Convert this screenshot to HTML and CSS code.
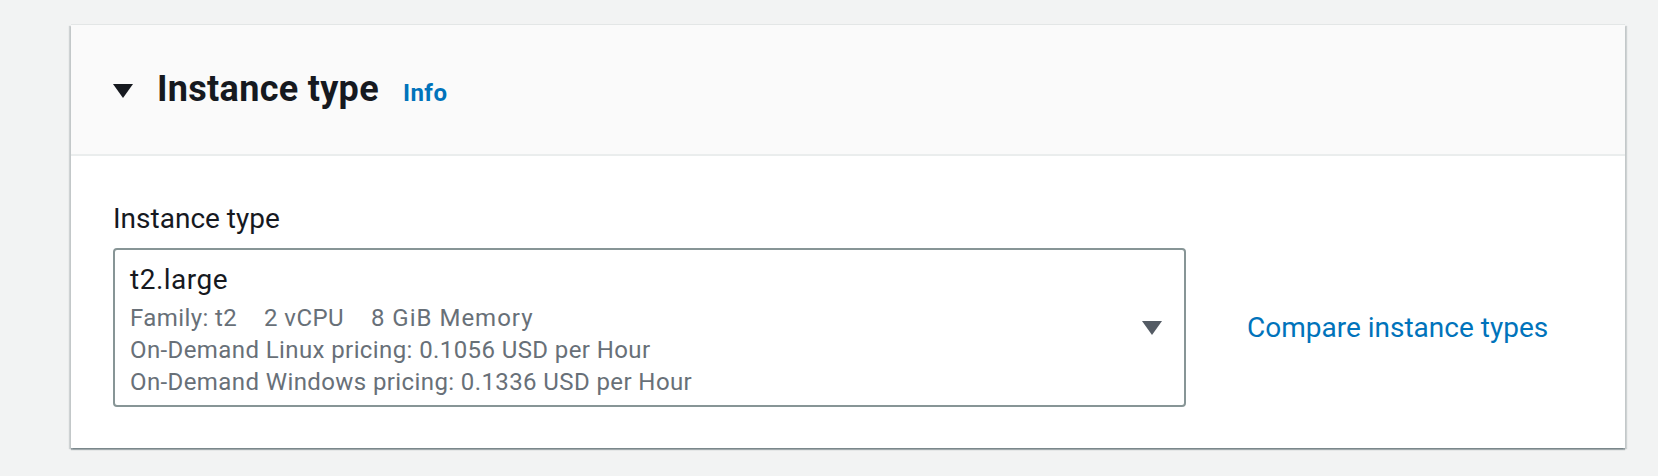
FILE: index.html
```html
<!DOCTYPE html>
<html lang="en">
<head>
<meta charset="utf-8">
<title>Instance type</title>
<link rel="stylesheet" href="styles.css">
</head>
<body>
<div class="page">
  <section class="card">
    <div class="card-header">
      <svg class="expand-icon" width="20" height="14" viewBox="0 0 20 14" aria-hidden="true"><polygon points="0,0 20,0 10,14" fill="#16191f"/></svg>
      <h2 class="card-title">Instance type<a class="info-link" href="#">Info</a></h2>
    </div>
    <div class="card-body">
      <div class="field-label">Instance type</div>
      <div class="field-row">
        <div class="select">
          <div class="select-content">
            <div class="select-value">t2.large</div>
            <div class="select-desc"><span class="tag">Family: t2</span><span class="tag">2 vCPU</span><span class="tag">8 GiB Memory</span></div>
            <div class="select-desc">On-Demand Linux pricing: 0.1056 USD per Hour</div>
            <div class="select-desc">On-Demand Windows pricing: 0.1336 USD per Hour</div>
          </div>
          <svg class="select-caret" width="20" height="14" viewBox="0 0 20 14" aria-hidden="true"><polygon points="0,0 20,0 10,14" fill="#545b64"/></svg>
        </div>
        <a class="compare-link" href="#">Compare instance types</a>
      </div>
    </div>
  </section>
</div>
</body>
</html>
```
FILE: styles.css
```css
* { box-sizing: border-box; }

body {
  margin: 0;
  background: #f2f3f3;
  font-family: Roboto, "Noto Sans", sans-serif;
  color: #16191f;
}

.page {
  padding: 25px 33px 28px 71px;
}

.card {
  background: #ffffff;
  box-shadow: 0 2px 1px 0 rgba(0, 28, 36, 0.3),
              2px 1px 1px 0 rgba(0, 28, 36, 0.15),
              -2px 1px 1px 0 rgba(0, 28, 36, 0.15),
              0 -1px 0 0 rgba(0, 28, 36, 0.06);
}

.card-header {
  display: flex;
  align-items: center;
  background: #fafafa;
  border-bottom: 2px solid #eaeded;
  padding: 42px 42px 39px 42px;
}

.expand-icon {
  flex: none;
  margin-right: 24px;
  display: block;
}

.card-title {
  margin: 0;
  font-size: 36px;
  line-height: 44px;
  font-weight: 700;
  letter-spacing: 0.3px;
  color: #16191f;
}

.info-link {
  margin-left: 24px;
  font-size: 24px;
  font-weight: 700;
  letter-spacing: 0.5px;
  color: #0073bb;
  text-decoration: none;
}

.card-body {
  padding: 41px 42px 41px 42px;
}

.field-label {
  font-size: 28px;
  line-height: 44px;
  color: #16191f;
  margin-bottom: 7px;
}

.field-row {
  display: flex;
  align-items: center;
}

.select {
  flex: none;
  width: 1073px;
  display: flex;
  align-items: center;
  justify-content: space-between;
  border: 2px solid #879596;
  border-radius: 4px;
  padding: 8px 22px 7px 15px;
}

.select-value {
  font-size: 28px;
  line-height: 44px;
  letter-spacing: 0.5px;
  color: #16191f;
}

.select-desc {
  font-size: 24px;
  line-height: 32px;
  letter-spacing: 0.4px;
  color: #687078;
}

.tag {
  margin-right: 27px;
}

.tag:last-child {
  margin-right: 0;
  letter-spacing: 1px;
}

.select-caret {
  flex: none;
  display: block;
}

.compare-link {
  margin-left: 61px;
  font-size: 28px;
  line-height: 44px;
  color: #0073bb;
  text-decoration: none;
}
```
